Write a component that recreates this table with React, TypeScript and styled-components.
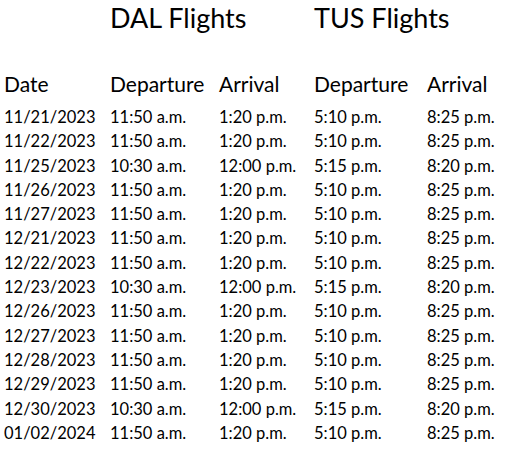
import styled, { createGlobalStyle } from 'styled-components';

const GlobalStyle = createGlobalStyle`
  body {
    margin: 0;
    background: #fff;
    font-family: Lato, 'Open Sans', sans-serif;
    color: #000;
  }
`;

const Sheet = styled.div`
  padding: 1px 0 0 4px;
`;

const Row = styled.div<{ $size: number; $height: number }>`
  display: grid;
  grid-template-columns: 106px 109px 95px 113px 1fr;
  font-size: ${(p) => p.$size}px;
  line-height: ${(p) => p.$height}px;
  height: ${(p) => p.$height}px;
  white-space: nowrap;
`;

const TitleRow = styled(Row)`
  margin-bottom: 37px;
`;

const HeaderRow = styled(Row)`
  margin-bottom: 9px;
`;

const Title = styled.div<{ $col: number }>`
  grid-column: ${(p) => p.$col} / span 2;
`;

const Cell = styled.div``;

const flights = [
  ['11/21/2023', '11:50 a.m.', '1:20 p.m.', '5:10 p.m.', '8:25 p.m.'],
  ['11/22/2023', '11:50 a.m.', '1:20 p.m.', '5:10 p.m.', '8:25 p.m.'],
  ['11/25/2023', '10:30 a.m.', '12:00 p.m.', '5:15 p.m.', '8:20 p.m.'],
  ['11/26/2023', '11:50 a.m.', '1:20 p.m.', '5:10 p.m.', '8:25 p.m.'],
  ['11/27/2023', '11:50 a.m.', '1:20 p.m.', '5:10 p.m.', '8:25 p.m.'],
  ['12/21/2023', '11:50 a.m.', '1:20 p.m.', '5:10 p.m.', '8:25 p.m.'],
  ['12/22/2023', '11:50 a.m.', '1:20 p.m.', '5:10 p.m.', '8:25 p.m.'],
  ['12/23/2023', '10:30 a.m.', '12:00 p.m.', '5:15 p.m.', '8:20 p.m.'],
  ['12/26/2023', '11:50 a.m.', '1:20 p.m.', '5:10 p.m.', '8:25 p.m.'],
  ['12/27/2023', '11:50 a.m.', '1:20 p.m.', '5:10 p.m.', '8:25 p.m.'],
  ['12/28/2023', '11:50 a.m.', '1:20 p.m.', '5:10 p.m.', '8:25 p.m.'],
  ['12/29/2023', '11:50 a.m.', '1:20 p.m.', '5:10 p.m.', '8:25 p.m.'],
  ['12/30/2023', '10:30 a.m.', '12:00 p.m.', '5:15 p.m.', '8:20 p.m.'],
  ['01/02/2024', '11:50 a.m.', '1:20 p.m.', '5:10 p.m.', '8:25 p.m.'],
];

function App() {
  return (
    <>
      <GlobalStyle />
      <Sheet>
        <TitleRow $size={27} $height={34}>
          <Title $col={2}>DAL Flights</Title>
          <Title $col={4}>TUS Flights</Title>
        </TitleRow>
        <HeaderRow $size={21} $height={24}>
          <Cell>Date</Cell>
          <Cell>Departure</Cell>
          <Cell>Arrival</Cell>
          <Cell>Departure</Cell>
          <Cell>Arrival</Cell>
        </HeaderRow>
        {flights.map((f) => (
          <Row key={f[0]} $size={16.5} $height={24.3}>
            {f.map((v, i) => (
              <Cell key={i}>{v}</Cell>
            ))}
          </Row>
        ))}
      </Sheet>
    </>
  );
}

export default App;
